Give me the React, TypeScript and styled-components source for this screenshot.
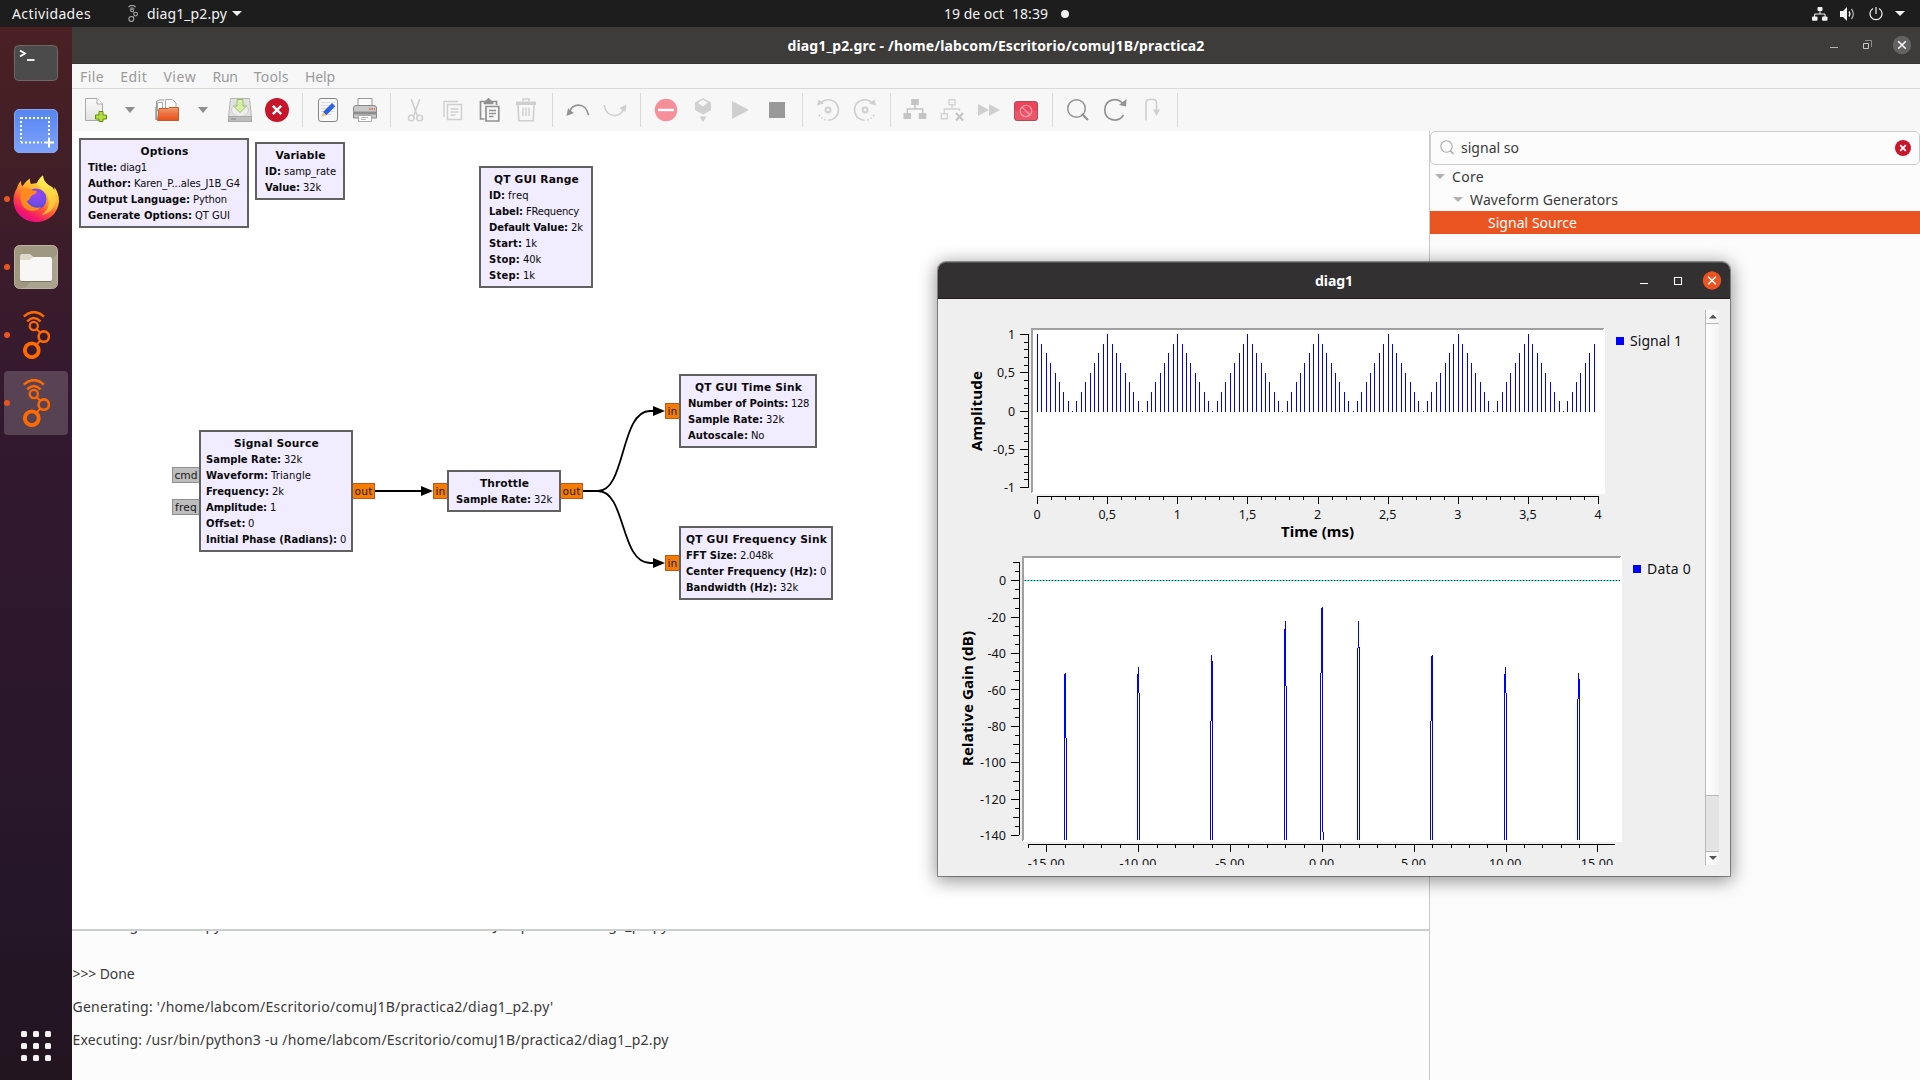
import React, { useLayoutEffect, useRef, useState } from "react";
import styled, { createGlobalStyle, css } from "styled-components";

const UI = `"Noto Sans", "Open Sans", sans-serif`;
const DJ = `"DejaVu Sans", sans-serif`;

const Global = createGlobalStyle`
  *, *::before, *::after { box-sizing: border-box; }
  html, body { margin: 0; padding: 0; background: #fff; overflow: hidden; }
  body { font-family: ${UI}; font-size: 14px; }
  svg { display: block; flex: none; }
`;

/* ---------- text tracked to a given advance width ---------- */
const Tracked = styled.span`
  display: inline-block;
  white-space: pre;
  flex: none;
`;

function Fit({ w, children }: { w: number; children: string }) {
  const ref = useRef<HTMLSpanElement>(null);
  const [ls, setLs] = useState(0);
  useLayoutEffect(() => {
    const el = ref.current;
    if (!el) return;
    el.style.letterSpacing = "0px";
    el.style.width = "auto";
    const natural = el.getBoundingClientRect().width;
    const next = (w - natural) / children.length;
    el.style.letterSpacing = `${next}px`;
    el.style.width = `${w}px`;
    setLs(next);
  }, [w, children]);
  return (
    <Tracked ref={ref} style={{ letterSpacing: ls, width: w }}>
      {children}
    </Tracked>
  );
}

/* ---------- shell ---------- */
const Screen = styled.div`
  position: relative;
  width: 1920px;
  height: 1080px;
  display: flex;
  flex-direction: column;
  overflow: hidden;
`;
const TopBar = styled.header`
  height: 27px;
  flex: none;
  background: #1d1d1d;
  color: #f2f2f2;
  display: grid;
  grid-template-columns: 944px 1fr auto;
  align-items: center;
`;
const TopGroup = styled.div<{ $gap?: number; $pl?: number; $pr?: number }>`
  display: flex;
  align-items: center;
  gap: ${(p) => p.$gap ?? 0}px;
  padding-left: ${(p) => p.$pl ?? 0}px;
  padding-right: ${(p) => p.$pr ?? 0}px;
  line-height: 26px;
`;
const Spacer = styled.div<{ $w: number }>`
  width: ${(p) => p.$w}px;
  flex: none;
`;
const Dot = styled.i`
  width: 8px;
  height: 8px;
  border-radius: 50%;
  background: #f2f2f2;
`;
const Desktop = styled.div`
  flex: 1;
  display: flex;
  min-height: 0;
`;

/* ---------- dock ---------- */
const Dock = styled.nav`
  width: 72px;
  flex: none;
  background: linear-gradient(180deg, #4a2023 0%, #411e27 14%, #34192f 34%, #2f182e 50%, #26162a 82%, #22151f 100%);
  display: flex;
  flex-direction: column;
  align-items: center;
  padding: 4px 0 19px;
  gap: 4px;
`;
const DockItem = styled.div<{ $active?: boolean; $running?: boolean }>`
  position: relative;
  width: 64px;
  height: 64px;
  flex: none;
  display: flex;
  align-items: center;
  justify-content: center;
  border-radius: 4px;
  background: ${(p) => (p.$active ? "rgba(255,255,255,.18)" : "transparent")};
  ${(p) =>
    p.$running &&
    css`
      &::before {
        content: "";
        position: absolute;
        left: 0;
        top: 29px;
        width: 6px;
        height: 6px;
        border-radius: 50%;
        background: #e95420;
      }
    `}
`;
const AppGrid = styled.div`
  margin-top: auto;
  display: grid;
  grid-template-columns: repeat(3, 6px);
  grid-auto-rows: 6px;
  gap: 6px;
  i {
    background: #f4f2f3;
    border-radius: 1.5px;
  }
`;

/* ---------- main window ---------- */
const Window = styled.main`
  flex: 1;
  min-width: 0;
  display: flex;
  flex-direction: column;
`;
const TitleBar = styled.div`
  height: 37px;
  flex: none;
  background: #3d3c3a;
  border-bottom: 1px solid #363533;
  color: #fff;
  font-weight: 700;
  line-height: 34px;
  display: grid;
  grid-template-columns: 1fr auto 1fr;
  align-items: center;
`;
const TitleText = styled.div<{ $pt: number }>`
  display: flex;
  padding-top: ${(p) => p.$pt}px;
`;
const WinButtons = styled.div<{ $pr: number }>`
  justify-self: end;
  padding-right: ${(p) => p.$pr}px;
`;
const MenuBar = styled.div`
  height: 25px;
  flex: none;
  background: #f7f7f7;
  border-bottom: 1px solid #d9d9d9;
  color: #9a9a9a;
  display: flex;
  gap: 16.2px;
  padding-left: 8px;
  line-height: 25px;
`;
const ToolBar = styled.div`
  height: 42px;
  flex: none;
  background: #f7f7f7;
  display: flex;
  align-items: center;
  padding-left: 6px;
`;
const Tool = styled.div`
  width: 37px;
  flex: none;
  padding-left: 7px;
`;
const Drop = styled.div<{ $w: number; $pl: number }>`
  width: ${(p) => p.$w}px;
  padding-left: ${(p) => p.$pl}px;
  flex: none;
`;
const Sep = styled.div<{ $l?: number; $r?: number }>`
  width: 1px;
  height: 34px;
  background: #dadada;
  margin: 0 ${(p) => p.$r ?? 6}px 0 ${(p) => p.$l ?? 7}px;
  flex: none;
`;
const Content = styled.div`
  flex: 1;
  display: flex;
  min-height: 0;
`;
const LeftPane = styled.div`
  width: 1357px;
  flex: none;
  display: flex;
  flex-direction: column;
`;
const Canvas = styled.div`
  position: relative;
  height: 798px;
  flex: none;
  background: #fff;
`;
const Console = styled.div`
  flex: 1;
  min-height: 0;
  overflow: hidden;
  background: #fcfcfc;
  border-top: 2px solid #ccd0cc;
  color: #3a3a3a;
`;
const Lines = styled.div`
  margin-top: -14px;
  display: flex;
  flex-direction: column;
`;
const Line = styled.div<{ $lead?: boolean }>`
  height: ${(p) => (p.$lead ? 15.6 : 16.6)}px;
  line-height: 16.6px;
  padding-left: 0.5px;
`;
const SidePane = styled.aside`
  flex: 1;
  border-left: 1px solid #c9c9c9;
  background: #fcfcfc;
  color: #3a3a3a;
`;
const SearchBox = styled.div`
  height: 34px;
  border: 1px solid #cdcdcd;
  border-radius: 5px;
  display: flex;
  align-items: center;
  padding: 0 8px 1px 9px;
  line-height: 18px;
  gap: 6px;
  svg:last-child {
    margin-left: auto;
  }
`;
const TreeRow = styled.div<{ $depth: number; $sel?: boolean }>`
  height: 23px;
  line-height: 23px;
  display: flex;
  align-items: center;
  padding-left: ${(p) => 5 + p.$depth * 18}px;
  gap: 7px;
  background: ${(p) => (p.$sel ? "#e95420" : "transparent")};
  color: ${(p) => (p.$sel ? "#fff" : "inherit")};
`;
const Twist = styled.span`
  width: 10px;
  flex: none;
`;

/* ---------- flow graph ---------- */
const BlockBox = styled.div<{ $x: number; $y: number; $w: number; $pl: number }>`
  position: absolute;
  left: ${(p) => p.$x - 72}px;
  top: ${(p) => p.$y - 131}px;
  width: ${(p) => p.$w}px;
  border: 2px solid #616161;
  background: #f1ecff;
  padding: 4px 0 2px ${(p) => p.$pl - 2}px;
  font: 10px/16px ${DJ};
  color: #0a0a0a;
  white-space: pre;
`;
const BlockTitle = styled.div<{ $pl: number }>`
  font-size: 10.67px;
  font-weight: 700;
  text-align: center;
  height: 16px;
  margin-left: ${(p) => 3 - p.$pl}px;
`;
const Param = styled.div`
  height: 16px;
  display: flex;
  gap: 3px;
  b {
    font-weight: 700;
  }
`;
const Port = styled.div<{ $x: number; $y: number; $w: number; $msg?: boolean }>`
  position: absolute;
  left: ${(p) => p.$x - 72}px;
  top: ${(p) => p.$y - 131}px;
  width: ${(p) => p.$w}px;
  height: 16px;
  background: ${(p) => (p.$msg ? "#bdbdbd" : "#f57c00")};
  border: 1.5px solid ${(p) => (p.$msg ? "#8f8f8f" : "#c2551d")};
  font: 10.67px/16.5px ${DJ};
  color: #1a1a1a;
  display: flex;
  justify-content: center;
`;
const Wires = styled.svg`
  position: absolute;
  left: 0;
  top: 0;
`;

/* ---------- floating plot window ---------- */
const Dialog = styled.section`
  position: absolute;
  left: 938px;
  top: 262px;
  width: 792px;
  height: 614px;
  border-radius: 8px 8px 0 0;
  background: #efefef;
  box-shadow: 0 0 0 1px rgba(0, 0, 0, 0.36), 0 3px 18px 2px rgba(0, 0, 0, 0.42);
  display: flex;
  flex-direction: column;
`;
const DialogTitle = styled.div`
  height: 37px;
  flex: none;
  border-radius: 8px 8px 0 0;
  background: #323030;
  border-top: 1px solid #555353;
  border-bottom: 1px solid #1f1d1d;
  color: #fff;
  font-weight: 700;
  line-height: 34px;
  display: grid;
  grid-template-columns: 1fr auto 1fr;
  align-items: center;
`;
const DialogBody = styled.div`
  flex: 1;
  min-height: 0;
  display: flex;
  padding: 11px 11px 11px 10px;
`;
const Plots = styled.div`
  width: 757px;
  flex: none;
  overflow: hidden;
`;
const PlotRow = styled.div`
  display: flex;
  align-items: flex-start;
`;
const Legend = styled.div<{ $pt: number; $pl: number }>`
  display: flex;
  align-items: center;
  gap: 6px;
  padding: ${(p) => p.$pt}px 0 0 ${(p) => p.$pl}px;
  line-height: 20px;
  color: #111;
  i {
    width: 8px;
    height: 8px;
    background: #00f;
  }
`;
const Scroll = styled.div`
  width: 14px;
  height: 555px;
  display: flex;
  flex-direction: column;
  border-left: 1px solid #b8b8b8;
  background: linear-gradient(90deg, #fdfdfd, #f4f4f4);
`;
const ScrollBtn = styled.div`
  height: 13px;
  padding-bottom: 1px;
  display: flex;
  align-items: center;
  justify-content: center;
`;
const Trough = styled.div`
  flex: 1;
  display: flex;
  flex-direction: column;
  justify-content: flex-end;
  border-top: 1px solid #b8b8b8;
`;
const Thumb = styled.div`
  height: 57px;
  background: #e4e4e4;
  border-top: 1px solid #b8b8b8;
  border-bottom: 1px solid #b8b8b8;
`;

/* ---------- icons ---------- */
const Caret = ({ w = 10, h = 6, c = "#8e8e8e" }) => (
  <svg width={w} height={h}>
    <path d={`M0 0H${w}L${w / 2} ${h}Z`} fill={c} />
  </svg>
);

const Radio = ({ w = 27, h = 48, c = "#ff6a00", thin = false }) => (
  <svg width={w} height={h} viewBox="0 0 27 48" fill="none" stroke={c}>
    <path d="M.8 5.6Q10.8-3.4 21 5.6" strokeWidth={thin ? 3 : 2.5} />
    <path d="M4.2 10.3Q10.8 3.8 17.6 10.3" strokeWidth={thin ? 2 : 2.5} />
    <circle cx="10.8" cy="15" r="4.1" strokeWidth={thin ? 3 : 2.2} />
    <circle cx="20.8" cy="25.6" r="5.2" strokeWidth={thin ? 3 : 2.6} />
    <circle cx="8.8" cy="39.3" r="6.9" strokeWidth={thin ? 3 : 3.9} />
    <path d="M13.8 18.4L17.2 21.6M17 29.8L13.4 33.8" strokeWidth="2" />
  </svg>
);

const Terminal = () => (
  <svg width="46" height="46" viewBox="0 0 46 46">
    <rect x="1.5" y="5.5" width="43" height="35" rx="4" fill="#4b4b4b" stroke="#6c6866" />
    <path d="M7 10.5l5 3-5 3" fill="none" stroke="#fff" strokeWidth="1.8" />
    <path d="M14 20h7.5" stroke="#fff" strokeWidth="1.8" />
  </svg>
);

const Shot = () => (
  <svg width="46" height="46" viewBox="0 0 46 46">
    <defs>
      <linearGradient id="shot" x1="0" y1="0" x2="0" y2="1">
        <stop offset="0" stopColor="#5585f2" />
        <stop offset="1" stopColor="#7ea3fb" />
      </linearGradient>
    </defs>
    <rect x="1.5" y="1.5" width="43" height="43" rx="4.5" fill="url(#shot)" stroke="#86a5ee" />
    <path d="M8 10H37M8 9V34M8 34.5H29M36 9V27" fill="none" stroke="#fff" strokeWidth="2" strokeDasharray="2 2" />
    <path d="M36 29.5V39.5M31 34.5H41" stroke="#fff" strokeWidth="2" />
  </svg>
);

const Firefox = () => (
  <svg width="48" height="48" viewBox="0 0 48 48">
    <defs>
      <linearGradient id="ffx" x1=".8" y1=".1" x2=".3" y2="1">
        <stop offset="0" stopColor="#fff44f" />
        <stop offset=".35" stopColor="#ffb02e" />
        <stop offset=".6" stopColor="#ff5a36" />
        <stop offset=".85" stopColor="#f5156c" />
        <stop offset="1" stopColor="#e0128c" />
      </linearGradient>
      <radialGradient id="ffg" cx=".55" cy=".3" r=".8">
        <stop offset="0" stopColor="#a03ff0" />
        <stop offset=".6" stopColor="#6a4ee8" />
        <stop offset="1" stopColor="#4a3fb8" />
      </radialGradient>
      <linearGradient id="fft" x1="0" y1="0" x2="0" y2="1">
        <stop offset="0" stopColor="#fff25a" />
        <stop offset="1" stopColor="#ffb431" />
      </linearGradient>
    </defs>
    <path d="M5 13C6 9.5 7.4 7.2 9 6c0 2.2.4 4 1.4 5.300C12 9 14.500 5.500 18 3.500c-.3 2 .2 4 1 5.500l6-1C26.500 4.500 29 2 31 .5c0 4 2 7 5.500 9.500 3.500 1.500 5 3 5.500 5 .6-1 .6-2 .4-3C45 16 47 20 47 25.500 46.500 38 36.500 47 24.500 47 12 47 2 38 1.500 26 1.200 21 2.800 16.500 5 13Z" fill="url(#ffx)" />
    <path d="M25 8.500C26.500 4.500 29 2 31 .5c0 4 2 7 5.500 9.500 5 3.500 8 9 7 17-1 7-7 12-14 13 7-5 9-12 6-19-2.500-5-7-6-10.500-12.500Z" fill="url(#fft)" />
    <circle cx="24" cy="24" r="10.500" fill="url(#ffg)" />
    <path d="M10 15c3-2.500 8-2 10.500.5 1.500 0 4 .2 4.500 1-.5 2.500-4 3-5.500 4.500C18 22.500 18 25 15 26c2 5 8 8 14 6-4 5-12 5-16.500 1C8 29 7.500 20 10 15Z" fill="#ff8a22" />
  </svg>
);

const Files = () => (
  <svg width="46" height="46" viewBox="0 0 46 46">
    <rect x="1.5" y="1.500" width="43" height="43" rx="5" fill="#9f977f" stroke="#b9b3a1" />
    <path d="M44 10v29a5 5 0 0 1-5 5H12Z" fill="#aaa38e" />
    <path d="M7 12a2 2 0 0 1 2-2h8l4 3.500H37V20H7Z" fill="#dcd9cc" />
    <path d="M7 16h10l3-3H37a2 2 0 0 1 2 2V35a2 2 0 0 1-2 2H9a2 2 0 0 1-2-2Z" fill="#f8f7f6" />
    <path d="M8 37.500H38" stroke="#7d7662" />
  </svg>
);

const T: React.FC<{ children: React.ReactNode }> = ({ children }) => (
  <svg width="24" height="24" viewBox="0 0 24 24" fill="none">
    {children}
  </svg>
);

const Page = () => (
  <>
    <defs>
      <linearGradient id="doc" x1="0" y1="0" x2="0" y2="1">
        <stop offset="0" stopColor="#fbfbfb" />
        <stop offset="1" stopColor="#e2e2e2" />
      </linearGradient>
    </defs>
    <path d="M.5.5H12l5.500 5.500V22.500H.5Z" fill="url(#doc)" stroke="#a9a9a9" />
    <path d="M12 .5V6h5.500" fill="#fff" stroke="#a9a9a9" />
  </>
);

const icons: Record<string, React.ReactNode> = {
  new: (
    <T>
      <Page />
      <path d="M14 13.500h4v3.500h3.500v4H18V23.500H14V21h-3.500v-4H14Z" fill="#b5de3d" stroke="#5f8a12" />
    </T>
  ),
  open: (
    <T>
      <path d="M1.500 22V3.500L4 2H9" fill="#f5f5f5" stroke="#999" />
      <path d="M2.500 4.500h5V13h-5Z" fill="#fff" stroke="#aaa" />
      <path d="M10.500 1.500h7l3.500 3.500V12H10.500Z" fill="#fafafa" stroke="#a9a9a9" />
      <path d="M.8 9V22" stroke="#999" />
      <defs>
        <linearGradient id="fold" x1="0" y1="0" x2="0" y2="1">
          <stop offset="0" stopColor="#f0a274" />
          <stop offset=".45" stopColor="#ef7140" />
          <stop offset="1" stopColor="#e4521d" />
        </linearGradient>
      </defs>
      <path d="M4 10.500h9l1-1H23.500V22.500H2.500Z" fill="url(#fold)" stroke="#c8582d" />
    </T>
  ),
  save: (
    <T>
      <path d="M2.500.5h19L23.500 19v4.500H.5V19Z" fill="#e2e2e2" stroke="#b5b5b5" />
      <ellipse cx="12" cy="12" rx="8.500" ry="6.500" fill="#ededed" stroke="#cfcfcf" />
      <path d="M.5 18.500h23v5H.5Z" fill="#bdbdbd" stroke="#a8a8a8" />
      <path d="M3 21h5" stroke="#888" />
      <path d="M9 1.500h6v6.500h3.500L12 14.500 5.500 8H9Z" fill="#d8efac" stroke="#9cc069" />
    </T>
  ),
  close: (
    <T>
      <circle cx="12" cy="12" r="12" fill="#c7162b" />
      <path d="M7.800 7.800l8.400 8.400M16.200 7.800l-8.400 8.400" stroke="#fff" strokeWidth="2.400" />
    </T>
  ),
  edit: (
    <T>
      <rect x="2.500" y=".5" width="19" height="23" rx="2.500" fill="#f8f8f8" stroke="#858585" />
      <path d="M5 4.500h14M5 7.500h14M5 10.500h14M5 13.500h14M5 16.500h10" stroke="#ddd" />
      <path d="M16 5l3.300 3.300-9 9L7 14Z" fill="#2f62e0" />
      <path d="M7 14l3.300 3.300L5.500 19Z" fill="#f2c48d" />
    </T>
  ),
  print: (
    <T>
      <path d="M5 .5H19V8H5Z" fill="#fbfbfb" stroke="#999" />
      <path d="M3 7.500H21a2.500 2.500 0 0 1 2.500 2.500V20H.5V10A2.500 2.500 0 0 1 3 7.500Z" fill="#c9c9c9" stroke="#8b8b8b" />
      <path d="M1 15h22" stroke="#8e8e8e" strokeWidth="3" />
      <path d="M16 11h6" stroke="#e26a45" strokeWidth="1.500" strokeDasharray="1.500 1" />
      <path d="M5.500 17.500h13v6h-13Z" fill="#fff" stroke="#aaa" />
      <path d="M8 19.500h7M8 21.500h5" stroke="#bbb" />
    </T>
  ),
  cut: (
    <T>
      <g stroke="#cfcfcf" strokeWidth="1.600">
        <path d="M8.200 1l6 16.500M16.800 1l-6 16.500" />
        <circle cx="8.300" cy="20" r="2.800" />
        <circle cx="16.700" cy="20" r="2.800" />
      </g>
    </T>
  ),
  copy: (
    <T>
      <g stroke="#cfcfcf" strokeWidth="1.400">
        <path d="M5 18H4V3.500H18" />
        <path d="M7.500 6.500H21.500V21.500H7.500Z" />
        <path d="M10.500 11h8M10.500 14h8M10.500 17h5" />
      </g>
    </T>
  ),
  paste: (
    <T>
      <g stroke="#929292" strokeWidth="1.700">
        <path d="M7.500 21H3.500V3.500H19.500V7" />
        <path d="M7.500 5.500V4l2-1 2-2.200L13.500 3l2 1v1.500Z" fill="#929292" />
        <path d="M9 8.500H21.800V23H9Z" />
        <path d="M12 12.500h7M12 15.500h7M12 18.500h4.500" />
      </g>
    </T>
  ),
  trash: (
    <T>
      <g stroke="#cfcfcf" strokeWidth="1.600">
        <path d="M2 5.300h20" strokeWidth="3.400" />
        <path d="M9 3.500V1h6v2.500" />
        <path d="M4 7l.8 15.800h14.400L20 7" />
        <path d="M9 9.500V18M12 9.500V18M15 9.500V18" strokeWidth="1.400" />
      </g>
    </T>
  ),
  undo: (
    <T>
      <path d="M3 15.500C5 4.500 20 3.500 22.500 17" stroke="#929292" strokeWidth="1.700" />
      <path d="M.5 18l1.500-7.500L8 15Z" fill="#929292" />
    </T>
  ),
  redo: (
    <T>
      <path d="M1.200 7C3 20.500 18.500 20.500 21 10" stroke="#cfcfcf" strokeWidth="1.700" />
      <path d="M23.500 6.500l-1 7.500L16.500 10Z" fill="#cfcfcf" />
    </T>
  ),
  kill: (
    <T>
      <circle cx="12" cy="12" r="11.200" fill="#f5909b" />
      <path d="M4 12h16" stroke="#fff" strokeWidth="2.400" />
    </T>
  ),
  gen: (
    <T>
      <path d="M12 0l8 4.500v7.500l-8 4.500-8-4.500V4.500Z" fill="#d0d0d0" />
      <path d="M12 1.800l5 3-5 3.700-5-3.700Z" fill="#f7f7f7" />
      <path d="M8.500 18.500h7L12 24Z" fill="#cfcfcf" />
    </T>
  ),
  play: (
    <T>
      <path d="M4 3l17 9-17 9Z" fill="#cfcfcf" />
    </T>
  ),
  stop: (
    <T>
      <path d="M4 4h16v16H4Z" fill="#999" />
    </T>
  ),
  ccw: (
    <T>
      <g stroke="#cfcfcf" strokeWidth="1.600">
        <path d="M5 5C9 0 21 0 22.500 11.500 22.500 18 18 22 12.500 22.200" />
        <path d="M3 17c2 3 5 5 9 5.200" strokeDasharray="1.500 2" />
        <circle cx="12" cy="12" r="2.400" strokeWidth="2" />
      </g>
      <path d="M1 7.500l1.500-6L8 5.500Z" fill="#cfcfcf" />
    </T>
  ),
  cw: (
    <T>
      <g stroke="#cfcfcf" strokeWidth="1.600">
        <path d="M19 5C15 0 3 0 1.500 11.500 1.500 18 6 22 11.500 22.200" />
        <path d="M21 17c-2 3-5 5-9 5.200" strokeDasharray="1.500 2" />
        <circle cx="12" cy="12" r="2.400" strokeWidth="2" />
      </g>
      <path d="M23 7.500l-1.500-6L16 5.500Z" fill="#cfcfcf" />
    </T>
  ),
  hier: (
    <T>
      <path d="M8.200 1h7.600v6H8.200ZM.5 15H8v6H.5ZM15.800 15h7.500v6h-7.500Z" fill="#c4c4c4" />
      <path d="M12 7v4M4.300 15v-4H19.700v4" stroke="#c4c4c4" strokeWidth="1.500" />
    </T>
  ),
  hierx: (
    <T>
      <g stroke="#d4d4d4" strokeWidth="1.400">
        <path d="M9 1.800h6v5H9ZM1.300 15.700h6v5h-6Z" />
        <path d="M12 7v4M4.300 15v-4H19.500v2" />
        <path d="M16 15l7 7.500M23 15l-7 7.500" stroke="#c4c4c4" strokeWidth="2" />
      </g>
    </T>
  ),
  ff: (
    <T>
      <path d="M1 6l11 6-11 6ZM12 6l11 6-11 6Z" fill="#cfcfcf" />
    </T>
  ),
  block: (
    <T>
      <rect x=".5" y="3.500" width="23" height="19" rx="2.500" fill="#f04258" stroke="#a5505b" />
      <path d="M1 13H23v7a2 2 0 0 1-2 2H3a2 2 0 0 1-2-2Z" fill="#ee5568" />
      <circle cx="12" cy="13" r="5.700" stroke="#fa9da8" strokeWidth="1.300" />
      <path d="M8 9l8 8" stroke="#fa9da8" strokeWidth="1.300" />
    </T>
  ),
  find: (
    <T>
      <circle cx="10.500" cy="10.500" r="8.800" stroke="#929292" strokeWidth="1.500" />
      <path d="M16 16l6 6" stroke="#929292" strokeWidth="2.200" />
    </T>
  ),
  reload: (
    <T>
      <path d="M20.500 6C14-1.500 2 1 1.800 12 2 22.500 15 25.500 20.500 17" stroke="#929292" strokeWidth="1.700" />
      <path d="M23.500 1l-.5 7.500L16 7Z" fill="#929292" />
    </T>
  ),
  loop: (
    <T>
      <path d="M6 22.500V5q0-3.500 3.500-3.500H13q3.500 0 3.500 3.500v8" stroke="#cfcfcf" strokeWidth="1.600" />
      <path d="M13 11.500h7l-3.500 6.500Z" fill="#cfcfcf" />
    </T>
  ),
};

const sepMargins: Record<string, [number, number]> = {
  "|": [7, 6],
  "|<": [7, 5],
  "|>": [8, 6],
};
const tools = ["save", "close", "|", "edit", "print", "|<", "cut", "copy", "paste", "trash", "|>", "undo", "redo", "|", "kill", "gen", "play", "stop", "|", "ccw", "cw", "|<", "hier", "hierx", "ff", "block", "|>", "find", "reload", "loop", "|"];

const Network = () => (
  <svg width="16" height="14" fill="#f2f2f2">
    <rect x="5.500" y="0" width="5" height="4" rx="1" />
    <rect x="0" y="9.500" width="5.500" height="4.300" rx="1" />
    <rect x="10" y="9.500" width="5.500" height="4.300" rx="1" />
    <path d="M8 4v3M2.700 10V7H13v3" fill="none" stroke="#f2f2f2" />
  </svg>
);
const Volume = () => (
  <svg width="16" height="14">
    <path d="M0 4h3l4-4v14l-4-4H0Z" fill="#f2f2f2" />
    <path d="M9 4.500q1.800 2.500 0 5" fill="none" stroke="#f2f2f2" strokeWidth="1.300" />
    <path d="M11.500 2q3.600 5 0 10" fill="none" stroke="#aaa" strokeWidth="1.300" />
  </svg>
);
const Power = () => (
  <svg width="14" height="14" fill="none" stroke="#f2f2f2" strokeWidth="1.200">
    <path d="M4 1.500a6 6 0 1 0 6 0M7 0v7" />
  </svg>
);

/* ---------- flow graph data ---------- */
type P = [string, number, string, number];
interface BlockDef {
  x: number;
  y: number;
  w: number;
  pl: number;
  title: string;
  tw: number;
  params: P[];
}
const blocks: BlockDef[] = [
  { x: 79, y: 138, w: 170, pl: 9, title: "Options", tw: 48, params: [["Title:", 29, "diag1", 27], ["Author:", 43, "Karen_P...ales_J1B_G4", 106], ["Output Language:", 102, "Python", 34], ["Generate Options:", 104, "QT GUI", 35]] },
  { x: 255, y: 142, w: 90, pl: 10, title: "Variable", tw: 50, params: [["ID:", 16, "samp_rate", 52], ["Value:", 35, "32k", 18]] },
  { x: 479, y: 166, w: 114, pl: 10, title: "QT GUI Range", tw: 85, params: [["ID:", 16, "freq", 21], ["Label:", 34, "FRequency", 53], ["Default Value:", 79, "2k", 12], ["Start:", 33, "1k", 12], ["Stop:", 31, "40k", 18], ["Step:", 31, "1k", 12]] },
  { x: 199, y: 430, w: 154, pl: 7, title: "Signal Source", tw: 85, params: [["Sample Rate:", 75, "32k", 18], ["Waveform:", 62, "Triangle", 40], ["Frequency:", 63, "2k", 12], ["Amplitude:", 61, "1", 6], ["Offset:", 39, "0", 6], ["Initial Phase (Radians):", 131, "0", 6]] },
  { x: 447, y: 470, w: 114, pl: 9, title: "Throttle", tw: 49, params: [["Sample Rate:", 75, "32k", 18]] },
  { x: 679, y: 374, w: 138, pl: 9, title: "QT GUI Time Sink", tw: 107, params: [["Number of Points:", 100, "128", 18], ["Sample Rate:", 75, "32k", 18], ["Autoscale:", 60, "No", 13]] },
  { x: 679, y: 526, w: 154, pl: 7, title: "QT GUI Frequency Sink", tw: 141, params: [["FFT Size:", 51, "2.048k", 33], ["Center Frequency (Hz):", 131, "0", 6], ["Bandwidth (Hz):", 91, "32k", 18]] },
];
const ports: [number, number, number, string, number, boolean?][] = [
  [172, 467, 28, "cmd", 23, true],
  [172, 499, 28, "freq", 22, true],
  [352, 483, 23, "out", 18],
  [433, 483, 15, "in", 10],
  [560, 483, 23, "out", 18],
  [665, 403, 15, "in", 10],
  [665, 555, 15, "in", 10],
];

/* ---------- plots ---------- */
const Ax = styled.svg`
  shape-rendering: crispEdges;
  text {
    font-family: ${UI};
    font-size: 12.5px;
    fill: #111;
  }
  .label {
    font-size: 15px;
    font-weight: 700;
    fill: #000;
  }
`;

const H = ({ x1, x2, y }: { x1: number; x2: number; y: number }) => <rect x={x1} y={y} width={x2 - x1} height={1} fill="#000" />;
const V = ({ x, y1, y2, c = "#000" }: { x: number; y1: number; y2: number; c?: string }) => <rect x={x} y={y1} width={1} height={y2 - y1} fill={c} />;

const TimePlot = () => {
  const yT = ["1", "0,5", "0", "-0,5", "-1"];
  const yW = [7, 18, 7, 22, 11];
  const xT = ["0", "0,5", "1", "1,5", "2", "2,5", "3", "3,5", "4"];
  return (
    <Ax width={660} height={238} viewBox="948 310 660 238">
      <rect x={1031} y={328} width={574} height={166} fill="#fff" />
      <path d="M1031 328H1604L1603 330H1033V492L1031 493Z" fill="#a0a0a0" />
      <V x={1028} y1={334} y2={488} />
      {Array.from({ length: 21 }, (_, i) => (
        <H key={i} x1={i % 5 ? 1024 : 1020} x2={1028} y={Math.round(334 + i * 7.65)} />
      ))}
      {yT.map((t, i) => (
        <text key={t} x={1015 - yW[i]} y={339 + i * 38.25} textLength={yW[i]}>{t}</text>
      ))}
      <H x1={1037} x2={1599} y={496} />
      {Array.from({ length: 41 }, (_, i) => (
        <V key={i} x={Math.round(1037 + i * 14.025)} y1={496} y2={i % 5 ? 500 : 504} />
      ))}
      {xT.map((t, i) => {
        const w = t.length > 1 ? 17.5 : 7;
        return <text key={t} x={1037 + i * 70.125 - w / 2} y={519} textLength={w}>{t}</text>;
      })}
      <text className="label" x={1281} y={536.5} textLength={73}>Time (ms)</text>
      <text className="label" transform="translate(982 451) rotate(-90)" textLength={80}>Amplitude</text>
      {Array.from({ length: 128 }, (_, k) => {
        const v = Math.abs(8 - (k % 16)) / 8;
        return <V key={k} x={Math.round(1037 + k * 4.383)} y1={Math.round(334 + (1 - v) * 77)} y2={412} c="#00f" />;
      })}
    </Ax>
  );
};

const spikes: [number, number, number][] = [
  [1064, 674, 840], [1065, 673, 738], [1066, 738, 840],
  [1137, 674, 840], [1138, 667, 693], [1139, 693, 840],
  [1210, 721, 840], [1211, 655, 721], [1212, 661, 840],
  [1284, 629, 840], [1285, 621, 686], [1286, 686, 840],
  [1320, 673, 840], [1321, 608, 673], [1322, 607, 832], [1323, 832, 840],
  [1357, 648, 840], [1358, 621, 648], [1359, 647, 840],
  [1430, 721, 840], [1431, 656, 721], [1432, 655, 840],
  [1504, 674, 840], [1505, 667, 693], [1506, 693, 840],
  [1577, 699, 840], [1578, 673, 699], [1579, 679, 840],
];

const FreqPlot = () => (
  <Ax width={677} height={317} viewBox="948 548 677 317">
    <rect x={1022} y={556} width={600} height={286} fill="#fff" />
    <path d="M1022 556H1621L1620 558H1024V840L1022 841Z" fill="#a0a0a0" />
    <V x={1019} y1={562} y2={835} />
    {Array.from({ length: 31 }, (_, i) => {
      const len = i === 0 ? 6 : (i - 2) % 4 === 0 ? 8 : i % 2 ? 4 : 6;
      return <H key={i} x1={1019 - len} x2={1019} y={Math.round(562 + i * 9.107)} />;
    })}
    {[0, -20, -40, -60, -80, -100, -120, -140].map((v, i) => {
      const w = v === 0 ? 7 : v > -100 ? 18.5 : 26;
      return <text key={v} x={1006 - w} y={585.3 + i * 36.43} textLength={w}>{String(v)}</text>;
    })}
    <rect x={1024} y={580} width={596} height={1} fill="#00ffff" />
    <path d="M1025 580.5H1620" stroke="#8b0000" strokeWidth={1} strokeDasharray="1 2" />
    <H x1={1028} x2={1615} y={844} />
    {Array.from({ length: 32 }, (_, i) => (
      <V key={i} x={Math.round(1028 + i * 18.37)} y1={844} y2={(i - 1) % 5 ? 848 : 852} />
    ))}
    {["-15.00", "-10.00", "-5.00", "0.00", "5.00", "10.00", "15.00"].map((t, i) => {
      const w = [37, 37, 29, 25, 25, 32.5, 32.5][i];
      return <text key={t} x={1046.2 + i * 91.8 - w / 2} y={867.5} textLength={w}>{t}</text>;
    })}
    <text className="label" transform="translate(972.500 766) rotate(-90)" textLength={135}>Relative Gain (dB)</text>
    {spikes.map(([x, a, b]) => (
      <V key={x} x={x} y1={a} y2={b} c="#00f" />
    ))}
  </Ax>
);

const logTail = "Executing: /usr/bin/python3 -u /home/labcom/Escritorio/comuJ1B/practica2/diag1_p2.py";

export default function App() {
  return (
    <Screen>
      <Global />
      <TopBar>
        <TopGroup $pl={12}>
          <Fit w={79}>Actividades</Fit>
          <Spacer $w={37} />
          <Radio w={10} h={17} c="#a9a9a9" thin />
          <Spacer $w={9} />
          <Fit w={80}>diag1_p2.py</Fit>
          <Spacer $w={5} />
          <Caret w={10} h={5} c="#f2f2f2" />
        </TopGroup>
        <TopGroup>
          <Fit w={60}>19 de oct</Fit>
          <Spacer $w={8} />
          <Fit w={36}>18:39</Fit>
          <Spacer $w={13} />
          <Dot />
        </TopGroup>
        <TopGroup $gap={12.5} $pr={15}>
          <Network />
          <Volume />
          <Power />
          <Caret w={10} h={5} c="#f2f2f2" />
        </TopGroup>
      </TopBar>
      <Desktop>
        <Dock>
          <DockItem><Terminal /></DockItem>
          <DockItem><Shot /></DockItem>
          <DockItem $running><Firefox /></DockItem>
          <DockItem $running><Files /></DockItem>
          <DockItem $running><Radio /></DockItem>
          <DockItem $running $active><Radio /></DockItem>
          <AppGrid>
            {Array.from({ length: 9 }, (_, i) => <i key={i} />)}
          </AppGrid>
        </Dock>
        <Window>
          <TitleBar>
            <span />
            <TitleText $pt={2}><Fit w={417}>diag1_p2.grc - /home/labcom/Escritorio/comuJ1B/practica2</Fit></TitleText>
            <WinButtons $pr={8}>
              <svg width="84" height="20" fill="none">
                <path d="M2 12.500h8" stroke="#b5b4b2" />
                <path d="M35.500 8.500h5v5h-5Z" stroke="#c9c8c6" />
                <path d="M37 5.500h6.500V12" stroke="#8d8c8a" />
                <circle cx="74" cy="10" r="9.200" fill="#636363" />
                <path d="M70.200 6.200l7.600 7.600M77.800 6.200l-7.600 7.600" stroke="#fff" strokeWidth="1.500" />
              </svg>
            </WinButtons>
          </TitleBar>
          <MenuBar>
            <Fit w={24}>File</Fit>
            <Fit w={27}>Edit</Fit>
            <Fit w={33}>View</Fit>
            <Fit w={25}>Run</Fit>
            <Fit w={35}>Tools</Fit>
            <Fit w={30}>Help</Fit>
          </MenuBar>
          <ToolBar>
            <Tool>{icons.new}</Tool>
            <Drop $w={33} $pl={10}><Caret /></Drop>
            <Tool>{icons.open}</Tool>
            <Drop $w={36} $pl={13}><Caret /></Drop>
            {tools.map((t, i) => {
              const m = sepMargins[t];
              return m ? <Sep key={i} $l={m[0]} $r={m[1]} /> : <Tool key={i}>{icons[t]}</Tool>;
            })}
          </ToolBar>
          <Content>
            <LeftPane>
              <Canvas>
                <Wires width="1357" height="798" viewBox="72 131 1357 798" fill="none" stroke="#000" strokeWidth="2">
                  <path d="M375 491H424" />
                  <path d="M583 491H598C626 491 620 411 650 411H656" strokeWidth="1.800" />
                  <path d="M583 491H598C626 491 620 563 650 563H656" strokeWidth="1.800" />
                  <path d="M421 486l12 5-12 5ZM653 406l12 5-12 5ZM653 558l12 5-12 5Z" fill="#000" stroke="none" />
                </Wires>
                {ports.map(([x, y, w, t, tw, msg], i) => (
                  <Port key={i} $x={x} $y={y} $w={w} $msg={msg}><Fit w={tw}>{t}</Fit></Port>
                ))}
                {blocks.map((b) => (
                  <BlockBox key={b.title} $x={b.x} $y={b.y} $w={b.w} $pl={b.pl}>
                    <BlockTitle $pl={b.pl}><Fit w={b.tw}>{b.title}</Fit></BlockTitle>
                    {b.params.map(([k, kw, v, vw]) => (
                      <Param key={k}><b><Fit w={kw}>{k}</Fit></b><Fit w={vw}>{v}</Fit></Param>
                    ))}
                  </BlockBox>
                ))}
              </Canvas>
              <Console>
                <Lines>
                  <Line $lead><Fit w={596}>{logTail}</Fit></Line>
                  <Line />
                  <Line />
                  <Line><Fit w={62}>{">>> Done"}</Fit></Line>
                  <Line />
                  <Line><Fit w={481}>Generating: '/home/labcom/Escritorio/comuJ1B/practica2/diag1_p2.py'</Fit></Line>
                  <Line />
                  <Line><Fit w={596}>{logTail}</Fit></Line>
                </Lines>
              </Console>
            </LeftPane>
            <SidePane>
              <SearchBox>
                <svg width="15" height="15" fill="none" stroke="#a9a9a9">
                  <circle cx="6.500" cy="6.500" r="5.700" strokeWidth="1.100" />
                  <path d="M10 10.500l3.500 3.500" strokeWidth="1.500" />
                </svg>
                <Fit w={58}>signal so</Fit>
                <svg width="16" height="16">
                  <circle cx="8" cy="8" r="8" fill="#c7162b" />
                  <path d="M5.200 5.200l5.600 5.600M10.800 5.200l-5.600 5.600" stroke="#fff" strokeWidth="1.700" />
                </svg>
              </SearchBox>
              <TreeRow $depth={0}><Twist><Caret w={10} h={5} c="#b2b2b2" /></Twist><Fit w={32}>Core</Fit></TreeRow>
              <TreeRow $depth={1}><Twist><Caret w={10} h={5} c="#b2b2b2" /></Twist><Fit w={148}>Waveform Generators</Fit></TreeRow>
              <TreeRow $depth={2} $sel><Twist /><Fit w={89}>Signal Source</Fit></TreeRow>
            </SidePane>
          </Content>
        </Window>
      </Desktop>
      <Dialog>
        <DialogTitle>
          <span />
          <TitleText $pt={0}><Fit w={38}>diag1</Fit></TitleText>
          <WinButtons $pr={8}>
            <svg width="84" height="20" fill="none" stroke="#fff">
              <path d="M2 12.500h8" />
              <path d="M36.500 6.500h7v7h-7Z" strokeWidth="1.100" />
              <circle cx="74" cy="9.500" r="9.200" fill="#e95420" stroke="none" />
              <path d="M70.200 5.700l7.600 7.600M77.800 5.700l-7.600 7.600" strokeWidth="1.500" />
            </svg>
          </WinButtons>
        </DialogTitle>
        <DialogBody>
          <Plots>
            <PlotRow>
              <TimePlot />
              <Legend $pt={21} $pl={8}><i /><Fit w={52}>Signal 1</Fit></Legend>
            </PlotRow>
            <PlotRow>
              <FreqPlot />
              <Legend $pt={11} $pl={8}><i /><Fit w={44}>Data 0</Fit></Legend>
            </PlotRow>
          </Plots>
          <Scroll>
            <ScrollBtn>
              <svg width="8" height="5"><path d="M0 4.500L4 .5 8 4.500Z" fill="#555" /></svg>
            </ScrollBtn>
            <Trough><Thumb /></Trough>
            <ScrollBtn><Caret w={8} h={4} c="#555" /></ScrollBtn>
          </Scroll>
        </DialogBody>
      </Dialog>
    </Screen>
  );
}
